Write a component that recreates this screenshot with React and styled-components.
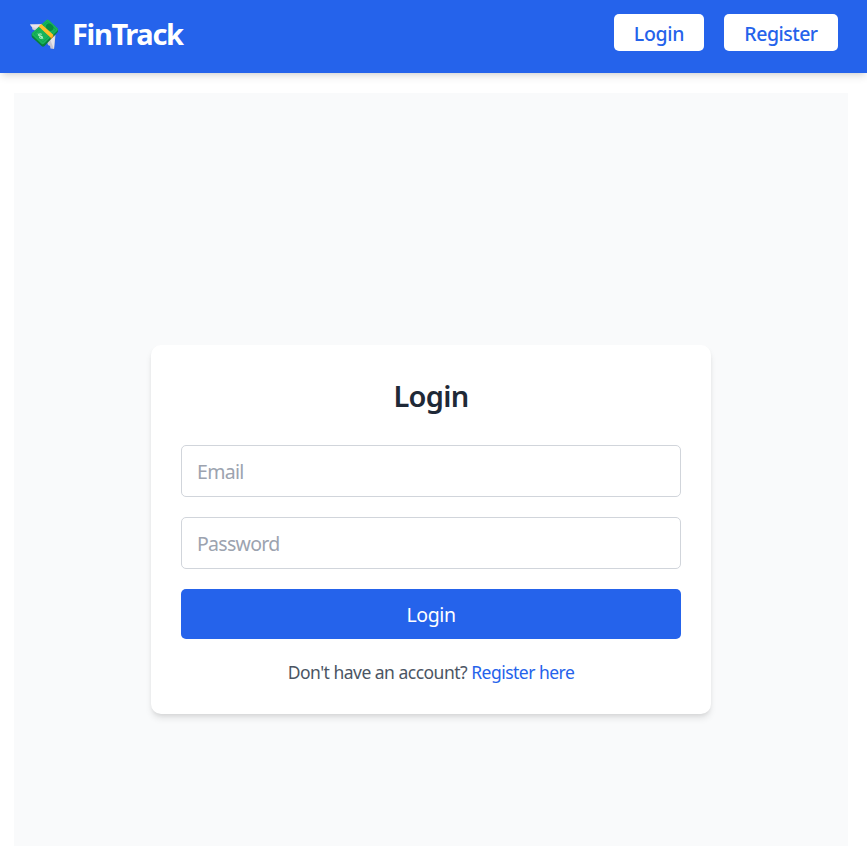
import React from 'react';
import styled, { createGlobalStyle } from 'styled-components';

const GlobalStyle = createGlobalStyle`
  *, *::before, *::after { box-sizing: border-box; }
  body {
    margin: 0;
    height: 846px;
    overflow: hidden;
    background: #ffffff;
    color: #1f2937;
    font-family: "Noto Sans", "Open Sans", sans-serif;
  }
  h1, h2, p { margin: 0; }
  button, input { font: inherit; letter-spacing: inherit; }
`;

const Header = styled.header`
  display: flex;
  align-items: flex-start;
  justify-content: space-between;
  height: 73px;
  padding: 14px 29px 0 28px;
  background: #2563eb;
  box-shadow: 0 5px 7.5px -1.25px rgba(0, 0, 0, 0.1), 0 2.5px 5px -2.5px rgba(0, 0, 0, 0.1);
`;

const Brand = styled.h1`
  display: flex;
  align-items: center;
  gap: 12px;
  height: 39px;
  color: #ffffff;
  font-size: 29px;
  font-weight: 700;
  line-height: 39px;
  letter-spacing: -1.35px;
`;

const MoneyIcon = styled.svg`
  display: block;
  width: 32px;
  height: 32px;
`;

const Nav = styled.nav`
  display: flex;
  gap: 20px;
`;

const NavButton = styled.button`
  width: ${(p) => p.$width}px;
  height: 37px;
  padding: 3px 0 0;
  border: 0;
  border-radius: 5px;
  background: #ffffff;
  color: #2563eb;
  font-size: 19.5px;
  font-weight: 500;
  line-height: 34px;
  letter-spacing: ${(p) => p.$tracking}px;
`;

const Page = styled.main`
  display: flex;
  justify-content: center;
  align-items: flex-start;
  height: 753px;
  margin: 20px 19px 0 14px;
  padding-top: 252px;
  background: #f9fafb;
`;

const Card = styled.form`
  width: 560px;
  height: 369px;
  padding: 30px;
  border-radius: 10px;
  background: #ffffff;
  box-shadow: 0 5px 7.5px -1.25px rgba(0, 0, 0, 0.1), 0 2.5px 5px -2.5px rgba(0, 0, 0, 0.1);
`;

const Title = styled.h2`
  margin-bottom: 29px;
  padding-top: 1px;
  color: #1f2937;
  font-size: 29px;
  font-weight: 600;
  line-height: 40px;
  letter-spacing: -0.7px;
  text-align: center;
`;

const Field = styled.input`
  display: block;
  width: 100%;
  height: 52px;
  margin-bottom: 20px;
  padding: 0 15px;
  border: 1px solid #d1d5db;
  border-radius: 5px;
  outline: none;
  background: #ffffff;
  color: #1f2937;
  font-size: 19.5px;
  letter-spacing: -0.7px;
  &::placeholder { color: #9ca3af; opacity: 1; }
`;

const Submit = styled.button`
  display: block;
  width: 100%;
  height: 50px;
  padding: 0;
  border: 0;
  border-radius: 5px;
  background: #2563eb;
  color: #ffffff;
  font-size: 19.5px;
  letter-spacing: -0.4px;
`;

const Note = styled.p`
  margin-top: 21px;
  color: #4b5563;
  font-size: 17.5px;
  line-height: 25px;
  letter-spacing: -0.51px;
  text-align: center;
  white-space: nowrap;
`;

const NoteLink = styled.a`
  color: #2563eb;
  text-decoration: none;
`;

function FlyingMoney() {
  return (
    <MoneyIcon viewBox="0 0 32 32" aria-hidden="true">
      <path d="M2 6.5 L14 6 L15 12 L8 15 L6.5 12 L4.5 11.5 L4 9 Z" fill="#d5d3dc" />
      <path d="M2 6.5 L13 6.8 L8 10 L4 9 Z" fill="#e6e4ea" />
      <path d="M20 21 L27.5 17 L26 31 L22.5 30.5 L22 28 L20 27 L19 24 Z" fill="#c9c6d2" />
      <path d="M22 21 L26.8 18.5 L26 31 L24.3 27 Z" fill="#e6e4ea" />
      <path d="M18.4 2.5 Q19.6 1.5 20.8 2.6 L29.5 10.7 Q30.6 12 29.8 14 L16.5 28 Q15 29.4 13.5 28 L4.2 19.5 Q3.2 18 3.7 15.5 Z" fill="#087f3b" />
      <path d="M18.4 2 Q19.6 1 20.8 2.1 L29.5 10.2 Q30.5 11.5 29.5 12.6 L16 25.8 Q14.8 26.8 13.5 25.7 L4.3 17.2 Q3.3 15.8 4.3 14.7 Z" fill="#19b35b" />
      <path d="M19.3 4 L27.8 11.6 L14.9 24 L6.2 15.9 Z" fill="none" stroke="#0fa24f" strokeWidth=".8" />
      <ellipse cx="21.7" cy="9.2" rx="4" ry="3.2" transform="rotate(42 21.7 9.2)" fill="#078c43" />
      <path d="M13.8 16.3 Q10.9 15 10.5 16.9 Q10.5 18.4 12.6 18.2 Q15 18 14.4 19.8 Q13.4 21.2 11 19.5 M10.1 15.6 L15 20.8" fill="none" stroke="#b9f5cd" strokeWidth="1" />
      <path d="M10.8 8.6 L13.4 6.2 L25.3 17 L25.2 19 L22.8 21.4 L22.7 19.6 Z" fill="#f39a20" />
      <path d="M10.8 8.6 L13.4 6.2 L25.3 17 L22.7 19.6 Z" fill="#ffc02b" />
    </MoneyIcon>
  );
}

export default function App() {
  return (
    <>
      <GlobalStyle />
      <Header>
        <Brand><FlyingMoney /><span>FinTrack</span></Brand>
        <Nav>
          <NavButton type="button" $width={90} $tracking={-0.3}>Login</NavButton>
          <NavButton type="button" $width={114} $tracking={-0.5}>Register</NavButton>
        </Nav>
      </Header>
      <Page>
        <Card onSubmit={(e) => e.preventDefault()}>
          <Title>Login</Title>
          <Field type="email" placeholder="Email" />
          <Field type="password" placeholder="Password" />
          <Submit type="submit">Login</Submit>
          <Note>Don't have an account? <NoteLink href="#register">Register here</NoteLink></Note>
        </Card>
      </Page>
    </>
  );
}
